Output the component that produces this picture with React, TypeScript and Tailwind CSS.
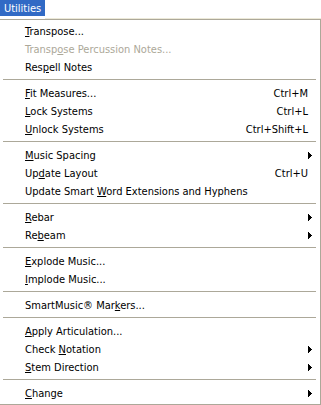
import React from "react";

type Item =
  | { sep: true }
  | {
      sep?: false;
      pre: string;
      key: string;
      post: string;
      shortcut?: string;
      sub?: boolean;
      disabled?: boolean;
    };

const items: Item[] = [
  { pre: "", key: "T", post: "ranspose..." },
  { pre: "Transp", key: "o", post: "se Percussion Notes...", disabled: true },
  { pre: "Res", key: "p", post: "ell Notes" },
  { sep: true },
  { pre: "", key: "F", post: "it Measures...", shortcut: "Ctrl+M" },
  { pre: "", key: "L", post: "ock Systems", shortcut: "Ctrl+L" },
  { pre: "", key: "U", post: "nlock Systems", shortcut: "Ctrl+Shift+L" },
  { sep: true },
  { pre: "", key: "M", post: "usic Spacing", sub: true },
  { pre: "Up", key: "d", post: "ate Layout", shortcut: "Ctrl+U" },
  { pre: "Update Smart ", key: "W", post: "ord Extensions and Hyphens" },
  { sep: true },
  { pre: "", key: "R", post: "ebar", sub: true },
  { pre: "Re", key: "b", post: "eam", sub: true },
  { sep: true },
  { pre: "", key: "E", post: "xplode Music..." },
  { pre: "", key: "I", post: "mplode Music..." },
  { sep: true },
  { pre: "SmartMusic® Mar", key: "k", post: "ers..." },
  { sep: true },
  { pre: "", key: "A", post: "pply Articulation..." },
  { pre: "Check ", key: "N", post: "otation", sub: true },
  { pre: "", key: "S", post: "tem Direction", sub: true },
  { sep: true },
  { pre: "", key: "C", post: "hange", sub: true },
];

function Arrow() {
  return (
    <svg width="4" height="7" viewBox="0 0 4 7" shapeRendering="crispEdges" className="block">
      <rect x="0" y="0" width="1" height="7" fill="#000" />
      <rect x="1" y="1" width="1" height="5" fill="#000" />
      <rect x="2" y="2" width="1" height="3" fill="#000" />
      <rect x="3" y="3" width="1" height="1" fill="#000" />
    </svg>
  );
}

export default function App() {
  return (
    <div className="w-[321px] h-[405px] bg-white overflow-hidden flex flex-col text-[11px] leading-none text-black font-['DejaVu_Sans_Condensed','Liberation_Sans',sans-serif]">
      <div className="h-[19px] flex shrink-0">
        <div className="w-[45px] h-[16px] bg-[#316AC5] text-white flex items-center pl-[4px]">
          Utilities
        </div>
        <div className="flex-1 flex flex-col justify-end">
          <div className="h-px bg-[#ECE9D8]" />
        </div>
      </div>
      <div className="flex-1 border-t border-r border-b border-[#ACA899] pt-[2px] flex flex-col">
        {items.map((it, i) =>
          it.sep ? (
            <div key={i} className="h-[8px] pt-[3px] pl-[3px] pr-[4px] shrink-0">
              <div className="h-px bg-[#ACA899]" />
            </div>
          ) : (
            <div
              key={i}
              className={`h-[18px] shrink-0 flex items-center pl-[25px] pr-[8px] ${
                it.disabled ? "text-[#ACA899]" : "text-black"
              }`}
            >
              <span className="whitespace-pre">
                {it.pre}
                <u className="underline underline-offset-[1px]">{it.key}</u>
                {it.post}
              </span>
              <span className="flex-1" />
              {it.shortcut && <span>{it.shortcut}</span>}
              <span className="w-[4px] flex items-center">{it.sub && <Arrow />}</span>
            </div>
          )
        )}
      </div>
    </div>
  );
}
